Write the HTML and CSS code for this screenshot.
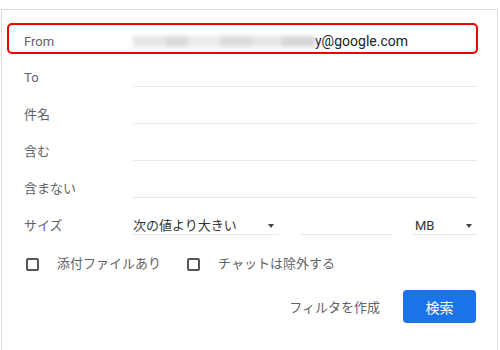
FILE: index.html
```html
<!DOCTYPE html>
<html lang="ja">
<head>
<meta charset="UTF-8">
<title>検索オプション</title>
<link rel="stylesheet" href="styles.css">
</head>
<body>

<div class="panel">
  <div class="from-mark">
    <div class="from-box">
      <span class="label">From</span>
      <span class="value"><span class="blur"></span><span class="mail">y@google.com</span></span>
    </div>
  </div>

  <div class="row short">
    <span class="label">To</span>
    <span class="field"></span>
  </div>
  <div class="row">
    <span class="label">件名</span>
    <span class="field"></span>
  </div>
  <div class="row">
    <span class="label">含む</span>
    <span class="field"></span>
  </div>
  <div class="row">
    <span class="label">含まない</span>
    <span class="field"></span>
  </div>
  <div class="row">
    <span class="label">サイズ</span>
    <div class="size">
      <span class="select wide">次の値より大きい<i class="arrow"></i></span>
      <span class="field num"></span>
      <span class="select unit">MB<i class="arrow"></i></span>
    </div>
  </div>

  <div class="checks">
    <span class="check"><i class="box"></i>添付ファイルあり</span>
    <span class="check"><i class="box"></i>チャットは除外する</span>
  </div>

  <div class="actions">
    <span class="link">フィルタを作成</span>
    <button class="btn">検索</button>
  </div>
</div>

</body>
</html>
```

FILE: styles.css
```css
body, html {
  margin: 0;
  padding: 0;
  background: #fff;
  font-family: Roboto, "Noto Sans CJK JP", sans-serif;
  font-size: 13px;
  color: #5f6368;
  overflow: hidden;
}
.panel {
  margin: 9px 0 0 1px;
  width: 453px;
  height: 327px;
  padding: 13px 20px 0 22px;
  border: 1px solid #dcdcdc;
  border-bottom: none;
}
.from-mark {
  margin: 0 -1px 0 -17px;
  border: 2px solid #f00;
  border-radius: 5px;
  height: 27px;
}
.from-box {
  display: grid;
  grid-template-columns: 109px 1fr;
  height: 27px;
  box-sizing: border-box;
  padding: 8px 15px 2px;
  line-height: 17px;
  border-radius: 3px;
  box-shadow: 0 0 3px rgba(0,0,0,0.25);
}
.value {
  display: flex;
  align-items: center;
}
.blur {
  display: inline-block;
  width: 182px;
  height: 11px;
  background: linear-gradient(90deg, #e6e6e6 0 18%, #d9d9d9 18% 30%, #ebebeb 30% 48%, #dcdcdc 48% 66%, #e6e6e6 66% 82%, #d6d6d6 82% 100%);
  filter: blur(2px);
}
.mail {
  font-size: 14px;
  color: #222;
}
.row {
  display: grid;
  grid-template-columns: 109px 1fr;
  align-items: end;
  height: 37px;
  line-height: 16px;
}
.row.short {
  height: 33px;
}
.row .label {
  padding-bottom: 1px;
}
.field {
  display: block;
  height: 16px;
  border-bottom: 1px solid #e6e8eb;
}
.size {
  display: flex;
  align-items: end;
}
.select {
  display: flex;
  justify-content: space-between;
  align-items: center;
  height: 16px;
  color: #333;
  border-bottom: 1px solid #e6e8eb;
  padding-right: 5px;
}
.select.wide {
  width: 141px;
}
.field.num {
  width: 92px;
  margin: 0 20px 0 22px;
}
.select.unit {
  width: 57px;
  padding-left: 2px;
}
.arrow {
  width: 0;
  height: 0;
  border-left: 3.5px solid transparent;
  border-right: 3.5px solid transparent;
  border-top: 4px solid #444;
}
.checks {
  display: flex;
  gap: 26px;
  padding: 21px 0 0 2px;
  line-height: 16px;
}
.check {
  display: flex;
  align-items: center;
  gap: 18px;
}
.box {
  width: 9px;
  height: 9px;
  border: 2px solid #555;
  border-radius: 2px;
}
.actions {
  display: flex;
  justify-content: flex-end;
  align-items: center;
  gap: 23px;
  padding: 18px 1px 0 0;
}
.btn {
  width: 73px;
  height: 33px;
  border: none;
  border-radius: 4px;
  background: #1a73e8;
  color: #fff;
  font-family: inherit;
  font-size: 14px;
}
```
